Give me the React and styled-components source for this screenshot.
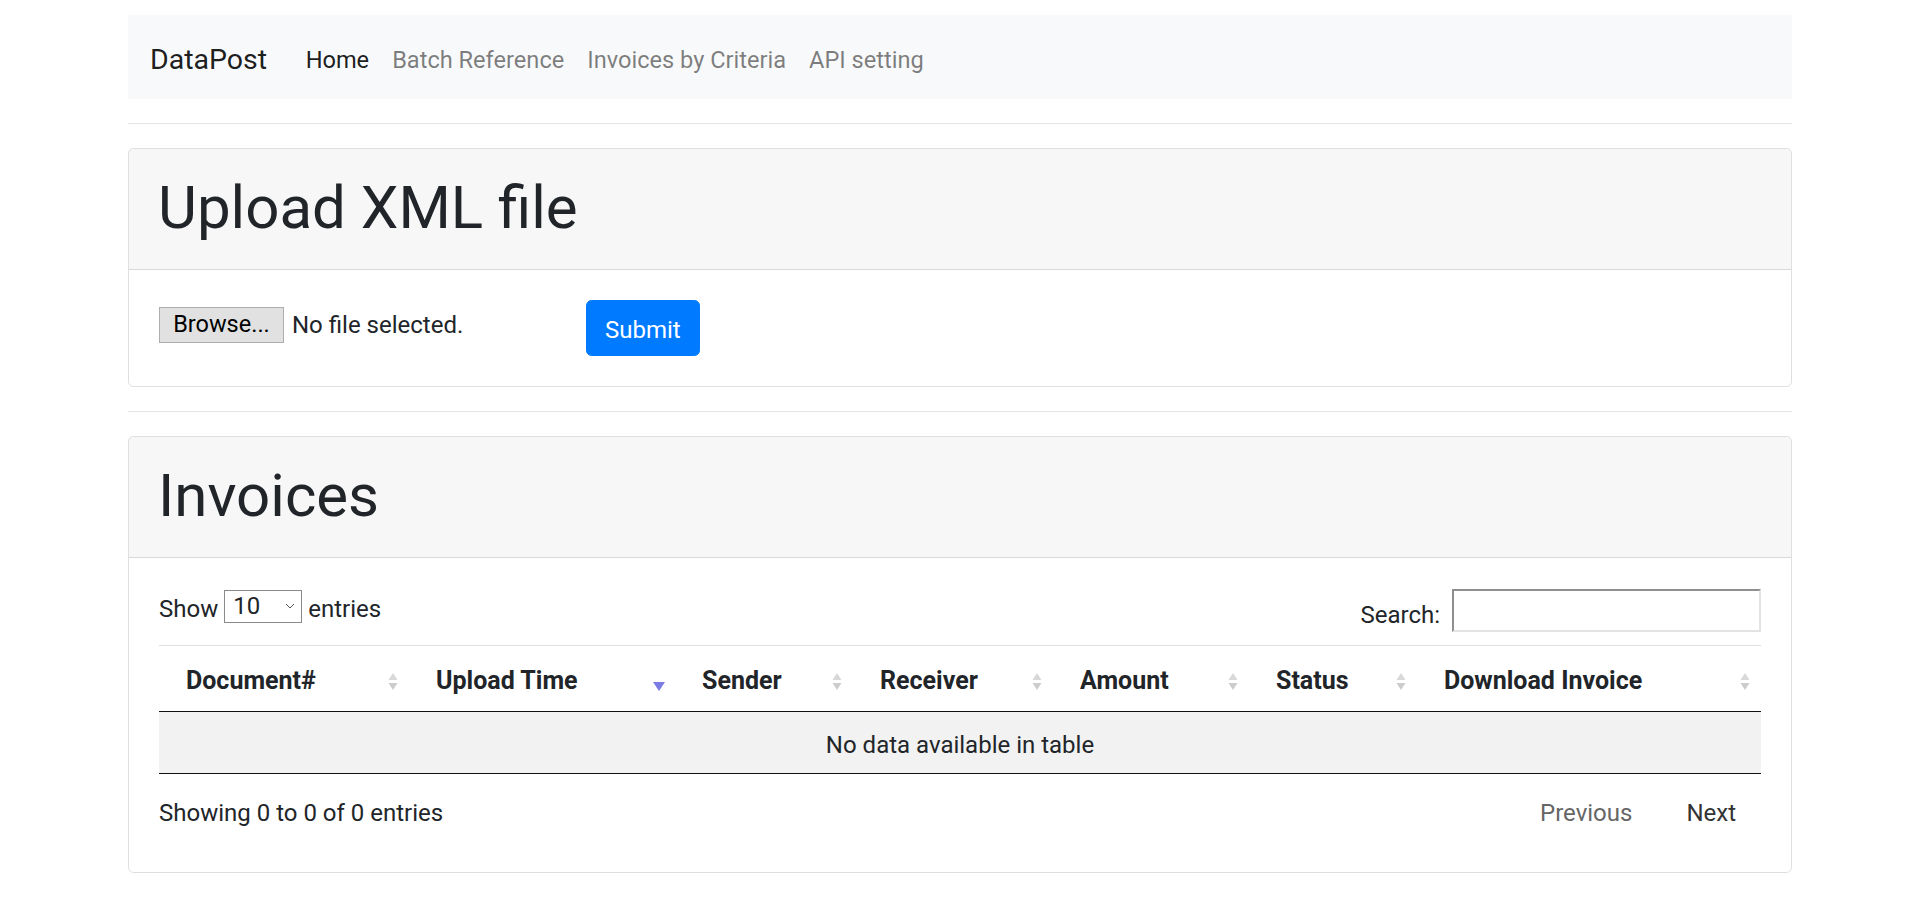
import React from "react";
import styled, { createGlobalStyle } from "styled-components";

const GlobalStyle = createGlobalStyle`
  html, body {
    margin: 0;
    padding: 0;
    background: #fff;
  }
  body {
    font-family: Roboto, "Open Sans", "Liberation Sans", sans-serif;
    font-size: 24px;
    line-height: 1.5;
    color: #212529;
  }
  * {
    box-sizing: border-box;
  }
`;

const Page = styled.div`
  padding: 15px 128px 36px;
`;

const Navbar = styled.nav`
  display: flex;
  align-items: center;
  height: 84px;
  padding: 7px 22px 0;
  background: #f8f9fa;
`;

const Brand = styled.a`
  font-size: 28.5px;
  color: rgba(0, 0, 0, 0.9);
  margin-right: 27px;
  text-decoration: none;
`;

const NavList = styled.ul`
  display: flex;
  margin: 0;
  padding: 0;
  list-style: none;
`;

const NavLink = styled.a`
  display: block;
  padding: 0 11.5px;
  font-size: 23.6px;
  color: ${(p) => (p.$active ? "rgba(0, 0, 0, 0.9)" : "rgba(0, 0, 0, 0.5)")};
  text-decoration: none;
`;

const Divider = styled.hr`
  margin: 24px 0;
  border: 0;
  border-top: 1px solid rgba(0, 0, 0, 0.1);
`;

const Card = styled.section`
  border: 1px solid rgba(0, 0, 0, 0.125);
  border-radius: 5.6px;
  overflow: hidden;
`;

const CardHeader = styled.div`
  background: rgba(0, 0, 0, 0.03);
  border-bottom: 1px solid rgba(0, 0, 0, 0.125);
  padding: 23px 29px 25px;
`;

const Title = styled.h1`
  margin: 0;
  font-size: 60px;
  font-weight: 400;
  line-height: 72px;
`;

const CardBody = styled.div`
  padding: ${(p) => (p.$table ? "31px 30px 31px" : "30px 30px 30px")};
`;

const UploadRow = styled.form`
  display: flex;
  align-items: center;
`;

const FileField = styled.label`
  display: flex;
  align-items: center;
  width: 427px;
  margin-bottom: 6px;
`;

const BrowseButton = styled.span`
  display: inline-flex;
  align-items: center;
  justify-content: center;
  width: 125px;
  height: 36px;
  background: #e1e1e1;
  border: 1px solid #adadad;
  color: #000;
  font-size: 23.5px;
`;

const FileName = styled.span`
  margin-left: 8px;
`;

const SubmitButton = styled.button`
  height: 56px;
  padding: 4px 18px 0;
  background: #007bff;
  border: 1px solid #007bff;
  border-radius: 5.6px;
  color: #fff;
  font-family: inherit;
  font-size: 24px;
`;

const Controls = styled.div`
  display: flex;
  justify-content: space-between;
  align-items: flex-start;
  height: 43px;
`;

const LengthLabel = styled.label`
  display: flex;
  align-items: center;
  height: 34px;
  gap: 6px;
`;

const LabelText = styled.span`
  padding-top: ${(p) => p.$shift || 6}px;
`;

const SelectBox = styled.span`
  display: inline-flex;
  align-items: center;
  justify-content: space-between;
  width: 78px;
  height: 33px;
  padding: 0 6px 0 8px;
  border: 1px solid #8a8a8a;
  background: #fff;
`;

const SearchLabel = styled.label`
  display: flex;
  align-items: center;
  height: 43px;
`;

const SearchInput = styled.input`
  width: 309px;
  height: 43px;
  margin-left: 12px;
  border-style: solid;
  border-width: 2px;
  border-color: #8f8f8f #e3e3e3 #e3e3e3 #8f8f8f;
  font-family: inherit;
  font-size: 24px;
  outline: none;
`;

const Table = styled.table`
  width: 100%;
  margin-top: 13px;
  border-collapse: collapse;
  table-layout: fixed;
`;

const Th = styled.th`
  width: ${(p) => p.$w}px;
  padding: 18px 10px 13px 27px;
  border-top: 1px solid #dee2e6;
  border-bottom: 1px solid #111;
  text-align: left;
  font-size: 25px;
  font-weight: 700;
  line-height: 34px;
`;

const ThInner = styled.div`
  display: flex;
  align-items: center;
  justify-content: space-between;
`;

const EmptyCell = styled.td`
  padding: 16px 25px 11px;
  background: #f2f2f2;
  border-bottom: 1px solid #111;
  text-align: center;
  line-height: 34px;
`;

const Footer = styled.div`
  display: flex;
  justify-content: space-between;
  align-items: center;
  height: 60px;
  margin-top: 7px;
  padding-top: 3px;
`;

const Pager = styled.div`
  display: flex;
`;

const PageButton = styled.a`
  padding: 0 25px;
  margin-left: 4px;
  color: ${(p) => (p.$disabled ? "#666" : "#333")};
  cursor: ${(p) => (p.$disabled ? "default" : "pointer")};
`;

function SortIcon({ dir }) {
  if (dir === "desc") {
    return (
      <svg width="12" height="24" viewBox="0 0 12 24">
        <polygon points="0,13 12,13 6,22" fill="#7b7be3" />
      </svg>
    );
  }
  return (
    <svg width="12" height="24" viewBox="0 0 12 24">
      <polygon points="1.5,11 6,4 10.5,11" fill="#d8d8d8" />
      <polygon points="1.5,14 10.5,14 6,21" fill="#cccccc" />
    </svg>
  );
}

function Chevron() {
  return (
    <svg width="10" height="6" viewBox="0 0 10 6">
      <polyline points="1,1 5,5 9,1" fill="none" stroke="#555" strokeWidth="1" />
    </svg>
  );
}

const columns = [
  { label: "Document#", w: 250 },
  { label: "Upload Time", w: 266, dir: "desc" },
  { label: "Sender", w: 178 },
  { label: "Receiver", w: 200 },
  { label: "Amount", w: 196 },
  { label: "Status", w: 168 },
  { label: "Download Invoice", w: 344 },
];

export default function App() {
  return (
    <Page>
      <GlobalStyle />
      <Navbar>
        <Brand href="#">DataPost</Brand>
        <NavList>
          <li>
            <NavLink href="#" $active>
              Home
            </NavLink>
          </li>
          <li>
            <NavLink href="#">Batch Reference</NavLink>
          </li>
          <li>
            <NavLink href="#">Invoices by Criteria</NavLink>
          </li>
          <li>
            <NavLink href="#">API setting</NavLink>
          </li>
        </NavList>
      </Navbar>

      <Divider />

      <Card>
        <CardHeader>
          <Title>Upload XML file</Title>
        </CardHeader>
        <CardBody>
          <UploadRow onSubmit={(e) => e.preventDefault()}>
            <FileField>
              <BrowseButton>Browse...</BrowseButton>
              <FileName>No file selected.</FileName>
            </FileField>
            <SubmitButton type="submit">Submit</SubmitButton>
          </UploadRow>
        </CardBody>
      </Card>

      <Divider />

      <Card>
        <CardHeader>
          <Title>Invoices</Title>
        </CardHeader>
        <CardBody $table>
          <Controls>
            <LengthLabel>
              <LabelText>Show</LabelText>
              <SelectBox>
                10
                <Chevron />
              </SelectBox>
              <LabelText>entries</LabelText>
            </LengthLabel>
            <SearchLabel>
              <LabelText $shift={9}>Search:</LabelText>
              <SearchInput type="search" />
            </SearchLabel>
          </Controls>
          <Table>
            <thead>
              <tr>
                {columns.map((c) => (
                  <Th key={c.label} $w={c.w}>
                    <ThInner>
                      {c.label}
                      <SortIcon dir={c.dir} />
                    </ThInner>
                  </Th>
                ))}
              </tr>
            </thead>
            <tbody>
              <tr>
                <EmptyCell colSpan={7}>No data available in table</EmptyCell>
              </tr>
            </tbody>
          </Table>
          <Footer>
            <span>Showing 0 to 0 of 0 entries</span>
            <Pager>
              <PageButton $disabled>Previous</PageButton>
              <PageButton>Next</PageButton>
            </Pager>
          </Footer>
        </CardBody>
      </Card>
    </Page>
  );
}
